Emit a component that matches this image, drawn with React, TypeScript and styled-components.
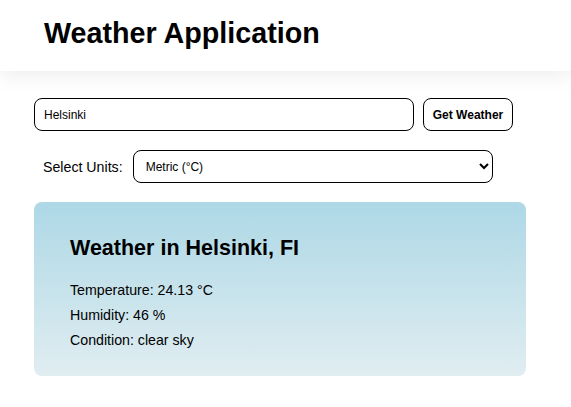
import React from "react";
import styled, { createGlobalStyle } from "styled-components";

const Global = createGlobalStyle`
  html, body { margin: 0; padding: 0; background: #fff; }
  body { font-family: "Liberation Sans", Arial, sans-serif; color: #000; }
`;

const Header = styled.header`
  box-sizing: border-box;
  height: 71px;
  display: flex;
  align-items: flex-start;
  padding: 17px 0 0 44px;
  background: #fff;
  box-shadow: 0 4px 20px rgba(0, 0, 0, 0.08);
  position: relative;
`;

const Title = styled.h1`
  margin: 0;
  font-size: 28.7px;
  font-weight: bold;
`;

const Main = styled.main`
  padding: 27px 34px 0;
  display: flex;
  flex-direction: column;
`;

const SearchRow = styled.div`
  display: flex;
  gap: 9px;
`;

const TextInput = styled.input`
  box-sizing: border-box;
  width: 380px;
  height: 33px;
  border: 1px solid #000;
  border-radius: 8px;
  padding: 0 9px;
  font: 12px "Liberation Sans", Arial, sans-serif;
  outline: none;
`;

const Button = styled.button`
  box-sizing: border-box;
  width: 90px;
  height: 33px;
  border: 1px solid #000;
  border-radius: 8px;
  background: #fff;
  font: bold 12px "Liberation Sans", Arial, sans-serif;
  color: #000;
  padding: 0;
`;

const UnitsRow = styled.div`
  display: flex;
  align-items: center;
  gap: 10px;
  margin-top: 19px;
  padding-left: 9px;
`;

const Label = styled.label`
  font-size: 14.2px;
`;

const Select = styled.select`
  box-sizing: border-box;
  width: 360px;
  height: 33px;
  border: 1px solid #000;
  border-radius: 8px;
  background: #fff;
  padding: 0 8px;
  font: 12px "Liberation Sans", Arial, sans-serif;
  color: #000;
`;

const Card = styled.section`
  box-sizing: border-box;
  width: 492px;
  margin-top: 19px;
  padding: 34px 36px 28px;
  border-radius: 8px;
  background: linear-gradient(to bottom, #add8e6, #e0edf1);
  display: flex;
  flex-direction: column;
`;

const CardTitle = styled.h2`
  margin: 0 0 21px;
  font-size: 21.5px;
  line-height: 25px;
  font-weight: bold;
`;

const Info = styled.p`
  margin: 0;
  font-size: 14.2px;
  line-height: 16px;
  & + & { margin-top: 9px; }
`;

export default function App() {
  return (
    <>
      <Global />
      <Header>
        <Title>Weather Application</Title>
      </Header>
      <Main>
        <SearchRow>
          <TextInput defaultValue="Helsinki" />
          <Button>Get Weather</Button>
        </SearchRow>
        <UnitsRow>
          <Label>Select Units:</Label>
          <Select defaultValue="metric">
            <option value="metric">Metric (°C)</option>
            <option value="imperial">Imperial (°F)</option>
          </Select>
        </UnitsRow>
        <Card>
          <CardTitle>Weather in Helsinki, FI</CardTitle>
          <Info>Temperature: 24.13 °C</Info>
          <Info>Humidity: 46 %</Info>
          <Info>Condition: clear sky</Info>
        </Card>
      </Main>
    </>
  );
}
